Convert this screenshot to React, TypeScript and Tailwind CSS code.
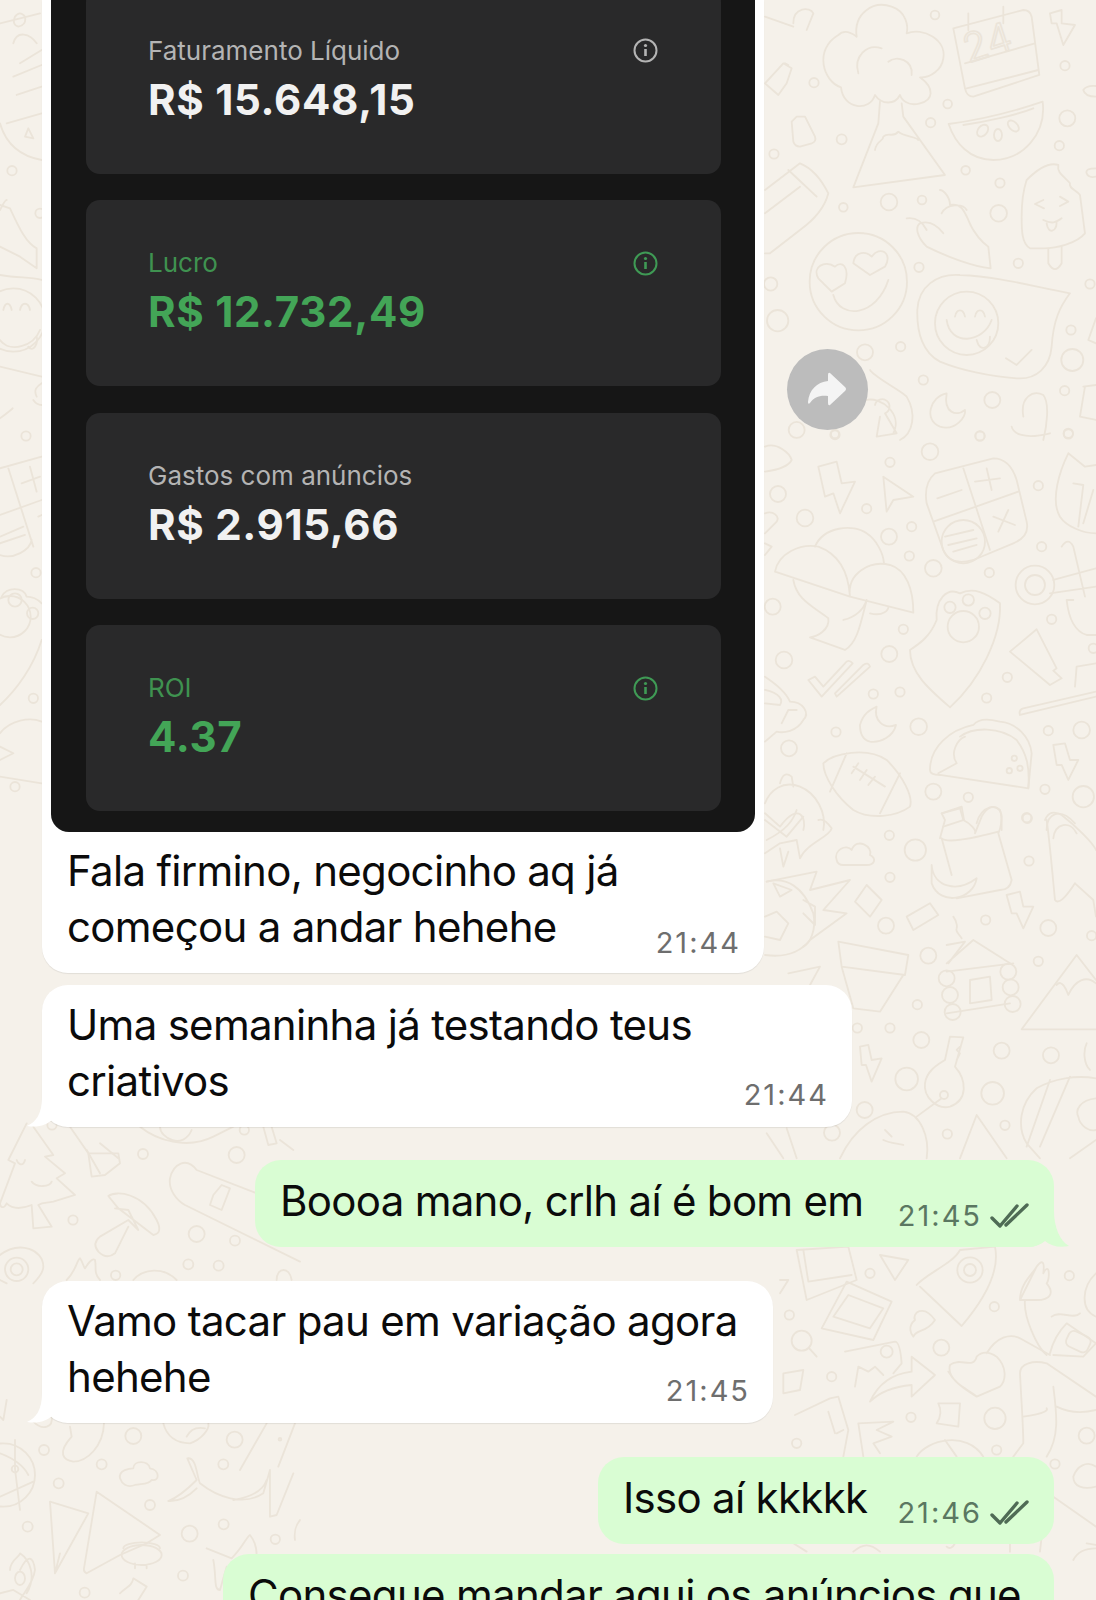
import type { ReactNode } from "react";

const SANS = "font-['Inter','Noto_Sans',sans-serif]";

type Dot = [number, number, number];

// doodles are authored in the coordinates of 3x crops of the wallpaper
function Patch({ x, y, dots, children }: { x: number; y: number; dots: Dot[]; children?: ReactNode }) {
  return (
    <g transform={`translate(${x} ${y}) scale(0.3333)`}>
      {dots.map(([cx, cy, r]) => (
        <circle key={`${cx}-${cy}`} cx={cx} cy={cy} r={r} />
      ))}
      {children}
    </g>
  );
}

function Wallpaper() {
  return (
    <svg
      className="absolute inset-0 h-[1600px] w-[1096px]"
      viewBox="0 0 1096 1600"
      fill="none"
      stroke="#ebe4d9"
      strokeLinecap="round"
      strokeLinejoin="round"
      aria-hidden
    >
      <g strokeWidth="5.5">
        <Patch
          x={760}
          y={0}
          dots={[[525,45,13],[162,248,14],[915,197,14],[563,312,13],[512,368,14],[922,355,24],[898,437,14],[245,418,15],[42,462,14],[617,511,13],[720,549,14],[387,606,25],[486,600,13],[250,622,13],[716,640,25],[477,802,14],[775,790,14],[990,852,14],[32,852,20],[53,962,32],[933,990,14],[937,1080,33],[315,1057,24],[422,1040,14],[914,1172,14],[490,1140,14],[697,1200,24],[925,1300,14],[110,1290,24],[225,1303,12],[660,1308,14]]}
        >
          <path d="M345 285C330 335 250 330 243 262C190 245 160 150 235 105C250 90 270 95 290 110C280 40 340 0 395 20C440 35 445 80 440 100C490 80 560 120 550 175C545 210 510 235 480 232C525 265 520 300 480 310C445 320 425 300 420 285C405 315 365 315 345 285Z" />
          <path d="M295 220C280 170 320 130 365 145M385 185C410 165 460 180 455 225" />
          <path d="M360 305L355 370L280 562L555 525L430 350L425 310M345 450C350 420 370 425 370 410C385 395 400 415 415 395C430 410 470 410 475 420" />
          <path d="M580 85L790 30Q810 30 815 50L838 225L640 290Q620 290 615 265ZM625 40L625 90M730 20L730 70M615 190L825 130M620 265L835 210" />
          <text x="625" y="190" transform="rotate(-18 625 190)" fontFamily="Inter, sans-serif" fontSize="120" fontWeight="300" strokeWidth="5">24</text>
          <path d="M566 372C660 360 760 335 848 305C860 400 790 480 700 480C630 480 585 430 566 372ZM610 375C680 365 770 345 820 325" />
          <ellipse cx="668" cy="392" rx="14" ry="20" transform="rotate(40 668 392)" />
          <ellipse cx="714" cy="405" rx="12" ry="18" />
          <ellipse cx="760" cy="378" rx="12" ry="20" transform="rotate(-45 760 378)" />
          <path d="M870 40L905 30L905 70L945 75L910 135L890 70L875 70Z" />
          <path d="M15 50L100 80M100 70C100 20 150 20 160 40L140 90" />
          <path d="M15 250L70 190L95 205L80 250L55 285ZM75 190L85 195" />
          <path d="M95 365L110 350L135 350L165 410Q170 425 155 430L120 440Q105 440 100 425Z" />
          <path d="M15 570L120 490Q170 510 205 580Q190 640 120 690L30 760L15 760M85 510L170 590M15 640L120 560" />
          <circle cx="295" cy="845" r="146" />
          <path d="M220 885C240 960 350 950 385 840M175 835C155 800 195 780 225 800C245 780 270 800 255 850L215 875ZM280 790C285 750 320 755 335 770C360 735 400 760 375 800L330 825Z" />
          <path d="M540 570C550 570 570 590 570 615C600 610 610 625 625 660C640 700 670 730 685 740L692 805C640 800 560 770 500 740C470 710 465 680 480 670C510 660 535 680 550 700M440 655C470 650 490 670 500 690M545 640C560 610 610 610 620 630" />
          <path d="M600 825C720 830 820 860 930 880C900 920 880 960 875 1040C870 1100 830 1140 770 1135C690 1130 600 1110 540 1085C490 1060 470 1000 472 930C475 860 530 820 600 825Z" />
          <circle cx="620" cy="970" r="95" />
          <path d="M560 960C570 1040 670 1030 695 960M585 950C590 925 610 925 615 950M645 950C650 925 670 925 675 950M650 1020C660 1060 690 1045 690 1010" />
          <path d="M738 1075L770 1095L815 1050M770 1095" />
          <path d="M800 540C850 490 880 490 895 495C890 520 915 530 930 550C925 565 950 570 960 585L975 700C950 730 890 745 850 745L810 745C785 730 785 690 785 650C785 610 790 570 800 540Z" />
          <path d="M865 745L865 790Q885 825 905 790L905 740M850 600L825 612L852 625M900 590L925 605L900 618M850 660C880 675 890 665 905 655M860 670C865 705 890 695 890 665" />
          <path d="M560 1180C510 1190 490 1260 540 1280C585 1295 620 1250 615 1230C590 1250 550 1240 560 1180Z" />
          <path d="M330 1110C340 1130 420 1170 440 1190C470 1240 460 1300 420 1320M320 1200C360 1190 430 1240 400 1300M345 1215A22 22 0 1 1 375 1240L410 1300L350 1310L360 1250" />
          <path d="M755 1280C760 1300 790 1320 870 1300M790 1250C780 1190 820 1170 850 1185C870 1210 860 1280 850 1320" />
          <path d="M970 1160L1008 1155M960 1250L1008 1260M975 1160L960 1250" />
          <path d="M970 270Q980 255 1008 258M1008 290Q975 290 970 270M1008 505Q975 505 980 520Q985 535 1008 530M1008 955L985 1020L1008 1030" />
        </Patch>
        <Patch
          x={760}
          y={430}
          dots={[[510,65,25],[390,97,14],[660,18,14],[225,14,14],[925,12,14],[835,167,14],[54,192,24],[135,264,25],[320,236,14],[455,290,14],[387,320,24],[448,378,14],[520,415,25],[688,428,14],[845,350,14],[38,530,24],[875,568,14],[430,598,14],[388,672,24],[72,690,25],[1000,655,14],[742,742,14],[340,792,14],[420,786,14],[680,804,14],[476,890,25],[228,906,14],[865,902,14],[965,900,25],[87,955,24],[520,1085,24],[855,1078,14],[970,1100,32],[625,1102,14],[800,1163,14]]}
        >
          <path d="M175 110L230 95L245 160L285 155L240 250L220 190L195 200Z" />
          <path d="M370 140L460 200L400 210L380 245Z" />
          <path d="M525 130L700 85Q750 85 770 150L800 275Q810 320 760 340L640 390Q570 410 550 360L500 220Q490 160 525 130ZM610 115L690 360M520 275L775 185" />
          <circle cx="610" cy="335" r="65" />
          <path d="M532 205L605 180M645 155L720 145M680 115L695 180M700 260L765 285M745 240L715 305M555 320L640 300M565 345L650 325M580 365L650 345" />
          <path d="M15 50C50 35 90 70 95 90C85 110 50 120 15 125M15 250C40 240 60 260 50 275L15 310M15 340L35 350L15 375" />
          <path d="M45 425C55 370 120 340 175 350C230 370 265 420 270 500ZM165 350C190 290 280 280 320 310C350 330 370 370 372 400M270 500C260 430 330 390 390 405C440 420 460 480 460 548ZM100 450C110 510 160 530 205 565C210 600 170 620 150 622L255 660C290 640 300 590 320 510M250 570C290 560 310 540 320 510M330 550C370 560 385 540 385 530" />
          <path d="M450 660C480 640 510 620 530 570C525 510 560 470 600 490C640 470 680 490 720 520C725 620 660 750 570 832C510 780 450 730 450 660Z" />
          <circle cx="610" cy="590" r="47" />
          <circle cx="570" cy="532" r="17" />
          <circle cx="625" cy="510" r="17" />
          <circle cx="675" cy="550" r="17" />
          <path d="M145 750L185 800L278 700Q265 685 255 700L190 770L165 740ZM230 800L330 710Q325 695 310 705L225 790Z" />
          <path d="M300 885C310 850 330 840 350 830C340 870 370 900 408 885C400 920 360 940 330 935C310 930 300 910 300 885Z" />
          <path d="M830 598L750 665L870 765L905 745L880 722L890 715Z" />
          <circle cx="825" cy="465" r="58" />
          <circle cx="825" cy="465" r="30" />
          <path d="M880 450L1008 415M870 490L1008 470M905 350Q925 320 940 350L975 500M940 510L920 510Q930 600 980 615L1008 615" />
          <path d="M15 740C60 770 80 790 90 815C130 815 150 850 130 870C110 905 70 910 50 905L15 935M15 780C60 790 70 810 60 825L15 820M65 880L85 840L110 840" />
          <path d="M880 945L915 940L930 990L955 990L925 1050L905 1005L890 1005Z" />
          <path d="M190 1000C220 970 320 950 380 990C430 1040 460 1100 450 1130C410 1160 330 1170 280 1140C230 1100 190 1040 190 1000ZM260 970L210 1085M420 1030L360 1150M280 1010L375 1070M295 1000L275 1030M320 1020L300 1050M345 1040L325 1065" />
          <path d="M510 1020C510 950 570 900 640 885C660 860 700 870 720 875C770 880 810 920 815 970L805 1075L540 1035Q510 1035 510 1020Z" />
          <path d="M600 920C640 890 720 890 770 930C800 970 810 1010 805 1075M535 1030L590 1000C570 970 590 930 615 920" />
          <circle cx="763" cy="985" r="8" />
          <circle cx="748" cy="1022" r="8" />
          <circle cx="780" cy="1015" r="8" />
          <path d="M945 770L950 710L1008 700M780 855L1008 800M780 855Q775 840 790 835L1008 785" />
          <path d="M15 1120C30 1080 70 1050 120 1070C170 1090 200 1150 190 1200M60 1060Q70 1020 95 1040L100 1070M15 1150L60 1190M60 1190C120 1110 140 1170 130 1200" />
          <path d="M545 1150L605 1130L612 1170L550 1190M650 1180C660 1130 720 1110 725 1160L725 1200M860 1200C860 1150 900 1130 945 1180" />
          <path d="M925 70L975 110L1008 105M925 70C900 120 870 210 900 260C920 290 970 310 1008 310M940 160L970 165L955 290M1000 180L970 280" />
        </Patch>
        <Patch
          x={760}
          y={800}
          dots={[[802,55,14],[388,106,14],[466,150,32],[807,183,14],[390,232,14],[677,360,14],[865,384,24],[378,377,24],[505,467,24],[995,407,14],[835,484,14],[472,614,14],[390,684,14],[292,684,14],[484,720,24],[725,752,24],[873,766,24],[440,837,34],[698,880,34],[314,930,24],[735,976,14],[216,998,24],[562,1002,14]]}
        >
          <path d="M20 120C80 90 100 60 110 30M60 145L70 200L85 155M15 60L80 110L130 50M15 160L60 130L110 120L120 175C140 130 210 110 215 85C190 50 180 60 175 60" />
          <path d="M230 180C220 150 260 130 275 150C290 110 340 140 330 165C350 175 345 195 320 195L250 195C240 195 232 190 230 180Z" />
          <path d="M540 115L555 60L545 40L600 25L610 60C630 70 650 90 645 100L665 50Q690 5 720 30C730 60 720 90 715 100L755 240Q750 270 720 270L590 295M545 115C560 130 640 115 715 95M575 225L545 115" />
          <path d="M515 195C520 260 590 280 650 235C640 300 540 320 515 250Z" />
          <path d="M855 60Q870 25 905 45C950 80 1000 130 1008 150M860 60C870 130 880 250 885 300Q900 320 945 250M945 250L1000 300L1008 350M880 115C885 70 930 60 950 100" />
          <path d="M740 285L780 275L790 320L820 320L790 385L770 340L755 340Z" />
          <path d="M320 255L285 305L330 350L365 300ZM20 245L170 215L150 270L270 240L190 330L260 340L150 420C110 470 50 470 15 465" />
          <path d="M20 245C80 230 130 260 160 340C170 390 150 430 130 440M40 250L95 270L60 290ZM15 350L50 335L85 370L60 420L15 410M130 300L165 320L165 375L130 340" />
          <path d="M440 350L510 310L535 345L460 390Z" />
          <path d="M580 350C595 370 590 385 590 385C585 395 600 405 605 415" />
          <path d="M235 425L445 465L435 525L245 500ZM245 500L280 625L360 635L430 525" />
          <path d="M560 490L640 420L750 490M560 435L615 425L565 490M560 515L760 490M560 640L750 610M630 540L690 530L695 600L630 610Z" />
          <circle cx="560" cy="535" r="24" />
          <circle cx="570" cy="585" r="24" />
          <circle cx="578" cy="636" r="24" />
          <circle cx="745" cy="515" r="24" />
          <circle cx="752" cy="562" r="24" />
          <circle cx="758" cy="612" r="24" />
          <path d="M785 688L950 465L1008 540M785 688L1008 688M890 555C905 535 920 570 925 585C945 540 980 525 1008 550" />
          <path d="M300 740L325 735L335 780L365 775L335 845L318 795L305 795Z" />
          <path d="M570 710L610 712L585 800C620 840 625 900 570 920C530 930 490 890 495 850C500 810 540 790 555 780ZM600 740L590 750L600 760L590 780" />
          <circle cx="552" cy="885" r="12" />
          <path d="M470 950L545 895M240 1075C280 990 350 935 430 935C480 940 510 1010 500 1075M375 990L395 1010M370 1020C390 1030 410 1030 430 1035M600 1075L650 945L740 1075" />
          <path d="M1008 835C950 825 880 835 830 865C780 910 770 980 800 1030L840 1075M870 840L800 1040M930 830L840 1040M1008 895C960 900 945 930 955 950C960 980 990 995 1008 990M1008 1020L930 1075M980 730C970 750 970 790 990 810" />
          <path d="M20 1000L70 1075M80 985L110 1075" />
          <path d="M85 520L180 500L150 555" />
        </Patch>
        <Patch
          x={0}
          y={1120}
          dots={[[156,15,14],[429,102,15],[710,105,24],[219,300,14],[590,342,24],[705,362,15],[565,433,15],[656,437,15],[347,466,14],[733,30,14]]}
        >
          <path d="M100 20L160 105L135 110L195 160L170 175L225 225L160 245C140 250 130 245 115 255L155 320L100 325L95 255C70 265 40 270 20 250C10 270 0 260 0 250L45 130L25 120L80 10M50 120C55 135 70 140 75 120M95 185C110 205 150 200 155 185" />
          <path d="M210 20L265 100L355 100L360 130L315 165L275 170L265 100" />
          <path d="M260 90L300 160M300 70L355 115" />
          <path d="M325 228C350 210 430 220 470 300Q490 340 460 345L355 265ZM345 265L385 270L415 330L385 300L300 350Q275 370 295 395Q320 420 345 400L385 320" />
          <path d="M420 20C470 60 560 90 640 50Q680 30 700 20M480 20C480 55 550 90 575 30M790 20L805 75L830 70L815 20M840 60L880 90" />
          <path d="M765 218L590 150C560 110 520 130 510 175C505 210 530 240 555 255L900 425" />
          <path d="M640 225L665 195L690 205L665 270L630 255Z" />
          <path d="M0 405C60 360 130 390 130 440C130 460 110 480 100 490M0 480L20 490M50 448m-35 0a35 35 0 1 0 70 0a35 35 0 1 0 -70 0M50 448m-18 0a18 18 0 1 0 36 0a18 18 0 1 0 -36 0" />
          <path d="M200 480C230 450 230 420 240 415C250 430 250 440 255 445C270 420 280 415 285 420C290 440 280 460 300 480M400 480C430 445 490 440 530 480M830 480C830 440 870 440 875 480" />
        </Patch>
        <Patch
          x={0}
          y={1400}
          dots={[[400,108,24],[704,119,24],[132,150,15],[305,193,15],[670,193,15],[176,250,15],[450,315,15],[569,401,24],[671,373,15],[83,380,15],[826,418,14],[549,527,15],[254,578,15]]}
        >
          <path d="M210 80L215 110C170 160 190 180 220 185C260 185 310 140 312 70" />
          <path d="M490 70C500 110 530 130 570 130C600 120 630 90 625 70M560 110C570 90 590 80 615 85" />
          <path d="M100 65C130 95 160 80 155 50" />
          <path d="M360 235C355 210 390 205 400 205C400 180 445 180 450 205C480 210 480 245 455 240C445 255 420 250 405 255C380 265 365 250 360 235Z" />
          <circle cx="10" cy="225" r="95" />
          <path d="M0 160C40 175 70 195 85 225M0 290L100 245M45 207L45 120M45 207L60 330" />
          <circle cx="45" cy="207" r="10" />
          <path d="M150 305L265 340L165 520ZM290 275L480 405L440 430L360 465L260 520Q250 515 252 505ZM165 520L180 460" />
          <path d="M365 465A60 30 0 1 1 485 465A60 30 0 1 1 365 465ZM370 445A55 18 0 0 1 480 445M405 490L405 505M440 495L440 505" />
          <path d="M505 303C540 290 570 260 590 240L562 175C590 170 590 230 600 250C650 290 730 320 790 280L810 210L810 350L830 345L880 220M505 303C540 305 565 290 590 265M700 300C760 290 790 270 800 240M800 70L720 210M885 70L835 200" />
          <circle cx="840" cy="118" r="4" />
          <path d="M620 445L695 475C730 440 740 410 750 405C770 430 770 460 770 465M640 480C650 530 640 570 660 570L680 500" />
          <path d="M60 510C85 460 100 470 105 510C100 550 70 580 60 600M30 510C30 480 60 470 60 460C90 480 110 530 80 580M0 580L40 570L90 600M60 520m-15 15a15 20 0 1 0 30 0a15 20 0 1 0 -30 0" />
          <path d="M360 580C380 560 395 560 400 535L440 560L415 600M20 0L10 60L0 50" />
          <path d="M885 420C880 380 895 370 900 360" />
        </Patch>
        <Patch
          x={780}
          y={1240}
          dots={[[270,100,14],[28,225,14],[643,200,14],[868,107,14],[484,323,24],[155,410,14],[393,532,14],[645,535,32],[50,610,14],[920,587,24],[650,630,14],[825,672,14]]}
        >
          <path d="M50 30L205 20L230 120L80 180ZM70 30L85 125L215 105" />
          <path d="M300 45L385 60L345 120Z" />
          <path d="M200 125L335 185L280 300L125 265ZM205 165L310 205L270 265L160 230Z" />
          <path d="M410 135C440 100 520 70 540 30L645 20C660 90 620 170 545 258L420 140" />
          <circle cx="570" cy="90" r="38" />
          <circle cx="570" cy="90" r="18" />
          <path d="M465 240C430 190 395 220 405 240C380 260 395 285 400 290C410 265 440 280 465 240Z" />
          <circle cx="65" cy="302" r="30" />
          <path d="M88 325L110 350M0 120L25 120L0 160" />
          <path d="M195 335L345 305Q360 305 365 370L340 400M225 440L235 380L265 395L285 380L310 405M320 335m-18 0a18 18 0 1 0 36 0a18 18 0 1 0 -36 0" />
          <path d="M270 485C300 420 350 400 395 395L395 350L465 405L395 470L395 435C340 440 300 455 270 485Z" />
          <path d="M10 400L70 390L60 450L10 460Z" />
          <path d="M475 490L540 490L535 560L470 550Q490 520 475 490Z" />
          <path d="M45 525L150 475L175 470L205 570L190 650M145 515L165 580M170 580L190 570M250 650L235 550L340 545L290 570L335 590L280 610L300 640" />
          <path d="M410 650C440 600 560 570 610 650M495 600L530 650" />
          <path d="M720 180C720 130 760 100 770 80M770 80C785 60 795 60 790 100C810 60 810 120 800 130C825 160 810 180 770 180C745 180 730 180 720 180ZM735 180C730 230 770 320 800 345" />
          <path d="M815 230C840 210 880 240 900 220M810 340C820 300 840 270 860 250L948 310L910 350L820 345" />
          <rect x="860" y="280" width="70" height="50" rx="16" transform="rotate(25 895 305)" />
          <path d="M620 340C650 290 690 280 720 295L810 345M510 375C540 350 580 390 590 350C600 340 620 330 650 350C680 380 680 420 660 440L590 470C540 440 500 410 510 375ZM505 395C530 440 570 450 590 470" />
          <path d="M720 400C720 370 760 360 800 370L948 470M720 400C725 500 730 560 730 610L700 650M820 440C830 520 840 590 800 650M800 505C810 520 730 530 730 530M830 500C870 520 910 520 948 510" />
          <path d="M948 100C905 140 900 210 948 230M880 710C890 680 920 660 948 680M948 740C910 750 880 740 880 710M820 770L948 860" />
          <path d="M920 910L948 915M880 960C890 940 910 925 948 925M40 910L80 935M220 935C250 910 270 910 300 935M500 920C510 930 520 920 525 910M690 905L690 935M785 890L780 935" />
        </Patch>
        <Patch x={0} y={0} dots={[[36,512,14],[120,640,14]]}>
          <path d="M0 70L120 40M45 50Q60 30 75 50Q80 75 55 80Q35 75 45 50M40 130C50 90 90 100 110 130M60 190L125 150M40 230L125 195M50 285L125 260M0 370C20 440 70 470 125 480M20 370L125 340M85 385L100 415L75 410Z" />
          <path d="M0 615L30 625C60 690 80 730 110 745L110 805L60 770L0 740M0 630Q15 600 20 600M0 825C60 835 90 830 125 840" />
          <circle cx="40" cy="960" r="95" />
          <path d="M0 1020C30 1060 100 1040 120 990M85 1040C100 1060 115 1030 110 1010M10 930C15 905 30 905 35 930M60 930C65 905 85 905 90 930M0 1100L125 1130M110 1190C100 1170 110 1160 125 1150" />
        </Patch>
        <Patch x={0} y={400} dots={[[78,108,14],[108,518,14],[100,895,14],[45,1160,14]]}>
          <path d="M0 55C20 40 35 30 38 25M100 0C110 15 125 15 125 15M0 205L125 170M25 205L100 440M65 250L120 230M90 200L110 275M0 345L125 300M0 465C40 480 90 450 95 420M0 410L70 380M0 430L75 405M115 350L125 345" />
          <circle cx="30" cy="650" r="62" />
          <circle cx="45" cy="600" r="20" />
          <circle cx="98" cy="640" r="17" />
          <path d="M5 590C20 560 70 560 80 590C100 590 115 600 125 610M125 720C100 800 50 870 0 915" />
          <path d="M0 1000C30 960 90 950 125 965M0 1040L40 1060L0 1080M0 1130L125 1150" />
        </Patch>
      </g>
    </svg>
  );
}

const DARK_CARDS = [
  { label: "Faturamento Líquido", value: "R$ 15.648,15", tone: "white", info: true },
  { label: "Lucro", value: "R$ 12.732,49", tone: "green", info: true },
  { label: "Gastos com anúncios", value: "R$ 2.915,66", tone: "white", info: false },
  { label: "ROI", value: "4.37", tone: "green", info: true },
];

function InfoIcon({ className }: { className: string }) {
  return (
    <svg className={className} viewBox="0 0 25 25" fill="none" stroke="currentColor" aria-hidden>
      <circle cx="12.5" cy="12.5" r="11" strokeWidth="2" />
      <path d="M12.5 11v7" strokeWidth="2.6" />
      <circle cx="12.5" cy="7.5" r="1.6" fill="currentColor" stroke="none" />
    </svg>
  );
}

function MetricCard({ label, value, tone, info }: (typeof DARK_CARDS)[number]) {
  const green = tone === "green";
  return (
    <div className="flex h-[186px] shrink-0 flex-col rounded-[14px] bg-[#29292a] pl-[62px] pr-[63px] pt-[46px]">
      <div className="flex h-[34px] items-center justify-between">
        <span className={`text-[26px] leading-[34px] ${green ? "text-[#3f9250]" : "text-[#b4b4b4]"}`}>
          {label}
        </span>
        {info && <InfoIcon className={`h-[25px] w-[25px] ${green ? "text-[#3f9a55]" : "text-[#b4b4b4]"}`} />}
      </div>
      <span className={`mt-[5px] text-[42px] font-bold leading-[54px] tracking-[0.7px] ${green ? "text-[#43a557]" : "text-[#f1f1f1]"}`}>
        {value}
      </span>
    </div>
  );
}

function DoubleCheck() {
  return (
    <svg className="h-[26px] w-[39px] shrink-0" viewBox="0 0 39 26" fill="none" stroke="#4f6b55" strokeWidth="3.4" strokeLinecap="round" strokeLinejoin="round" aria-hidden>
      <path d="M2 15l8 8L27 3" />
      <path d="M16 22L37 2" />
    </svg>
  );
}

function Stamp({ time, sent, className = "" }: { time: string; sent?: boolean; className?: string }) {
  return (
    <span className={`ml-auto flex shrink-0 items-center gap-[8px] text-[29px] leading-[34px] tracking-[2px] ${sent ? "text-[#5b7761]" : "text-[#6e6e6e]"} ${className}`}>
      {time}
      {sent && <DoubleCheck />}
    </span>
  );
}

function IncomingTail() {
  return (
    <svg className="absolute bottom-0 left-[-15px] h-[30px] w-[45px]" viewBox="0 0 45 30" fill="#ffffff" aria-hidden>
      <path d="M15 0C15 17 9 25 0 29C11 31 20 28 26 22C33 27 38 30 45 30L45 0Z" />
    </svg>
  );
}

function OutgoingTail() {
  return (
    <svg className="absolute bottom-0 right-[-15px] h-[36px] w-[40px]" viewBox="0 0 40 36" fill="#d9fdd3" aria-hidden>
      <path d="M25 0C25 16 31 30 40 35C30 37 22 35 16 30C10 34 5 36 0 36L0 0Z" />
    </svg>
  );
}

function Incoming({ lines, time, width, tail }: { lines: string[]; time: string; width: string; tail?: boolean }) {
  return (
    <div className={`relative ml-[42px] flex items-end rounded-[26px] bg-white pb-[18px] pl-[25px] pr-[25px] pt-[12px] shadow-[0_1px_1px_rgba(0,0,0,0.08)] ${width}`}>
      {/* first line may run above the stamp, as in a real chat bubble */}
      <p className="min-w-0 flex-1 text-[42px] leading-[56px] tracking-[-0.7px] text-[#0b0b0b]">
        {lines.map((line) => (
          <span key={line} className="block whitespace-nowrap">{line}</span>
        ))}
      </p>
      <Stamp time={time} className="relative z-10 mb-[-3px] mr-[-2px]" />
      {tail && <IncomingTail />}
    </div>
  );
}

function Outgoing({ text, time, width, tail }: { text: string; time: string; width: string; tail?: boolean }) {
  return (
    <div className={`relative mr-[42px] flex items-end self-end rounded-[26px] bg-[#d9fdd3] pb-[14px] pl-[25px] pr-[25px] pt-[13px] ${width}`}>
      <p className="whitespace-nowrap pb-[4px] text-[42px] leading-[56px] tracking-[-0.7px] text-[#0b0b0b]">{text}</p>
      {time && <Stamp time={time} sent />}
      {tail && <OutgoingTail />}
    </div>
  );
}

function ForwardButton() {
  return (
    <div className="ml-[23px] mt-[349px] flex h-[81px] w-[81px] shrink-0 items-center justify-center rounded-full bg-[#bcbcbc]">
      <svg className="h-[81px] w-[81px]" viewBox="0 0 81 81" fill="#f4f4f4" aria-hidden>
        <path d="M43 24L58 38Q60 40 58 42L43 56Q41 57 41 54V47C33 46 27 48 23 54Q21 56 21 53C22 41 30 33 41 32V26Q41 23 43 24Z" />
      </svg>
    </div>
  );
}

export default function App() {
  return (
    <div className={`relative h-[1600px] w-[1096px] overflow-hidden bg-[#f5f1ea] ${SANS}`}>
      <Wallpaper />
      <div className="relative flex flex-col">
        <div className="ml-[42px] flex items-start">
          <div className="w-[722px] rounded-b-[26px] bg-white px-[9px] shadow-[0_1px_1px_rgba(0,0,0,0.08)]">
            <div className="flex h-[832px] flex-col justify-end gap-[26.5px] overflow-hidden rounded-b-[18px] bg-[#161616] pb-[21px] pl-[35px] pr-[34px]">
              {DARK_CARDS.map((card) => (
                <MetricCard key={card.label} {...card} />
              ))}
            </div>
            <div className="flex items-end pb-[18px] pl-[16px] pr-[16px] pt-[11px]">
              <p className="text-[42px] leading-[56px] tracking-[-0.7px] text-[#0b0b0b]">
                <span className="block whitespace-nowrap">Fala firmino, negocinho aq já</span>
                <span className="block whitespace-nowrap">começou a andar hehehe</span>
              </p>
              <Stamp time="21:44" className="mb-[-5px] mr-[-2px]" />
            </div>
          </div>
          <ForwardButton />
        </div>
        <div className="mt-[12px] flex flex-col">
          <Incoming lines={["Uma semaninha já testando teus", "criativos"]} time="21:44" width="w-[810px]" tail />
        </div>
        <div className="mt-[33px] flex flex-col">
          <Outgoing text="Boooa mano, crlh aí é bom em" time="21:45" width="w-[799px]" tail />
        </div>
        <div className="mt-[34px] flex flex-col">
          <Incoming lines={["Vamo tacar pau em variação agora", "hehehe"]} time="21:45" width="w-[731px]" tail />
        </div>
        <div className="mt-[34px] flex flex-col">
          <Outgoing text="Isso aí kkkkk" time="21:46" width="w-[456px]" />
        </div>
        <div className="mt-[10px] flex flex-col">
          <Outgoing text="Consegue mandar aqui os anúncios que" time="" width="w-[831px]" />
        </div>
      </div>
    </div>
  );
}
